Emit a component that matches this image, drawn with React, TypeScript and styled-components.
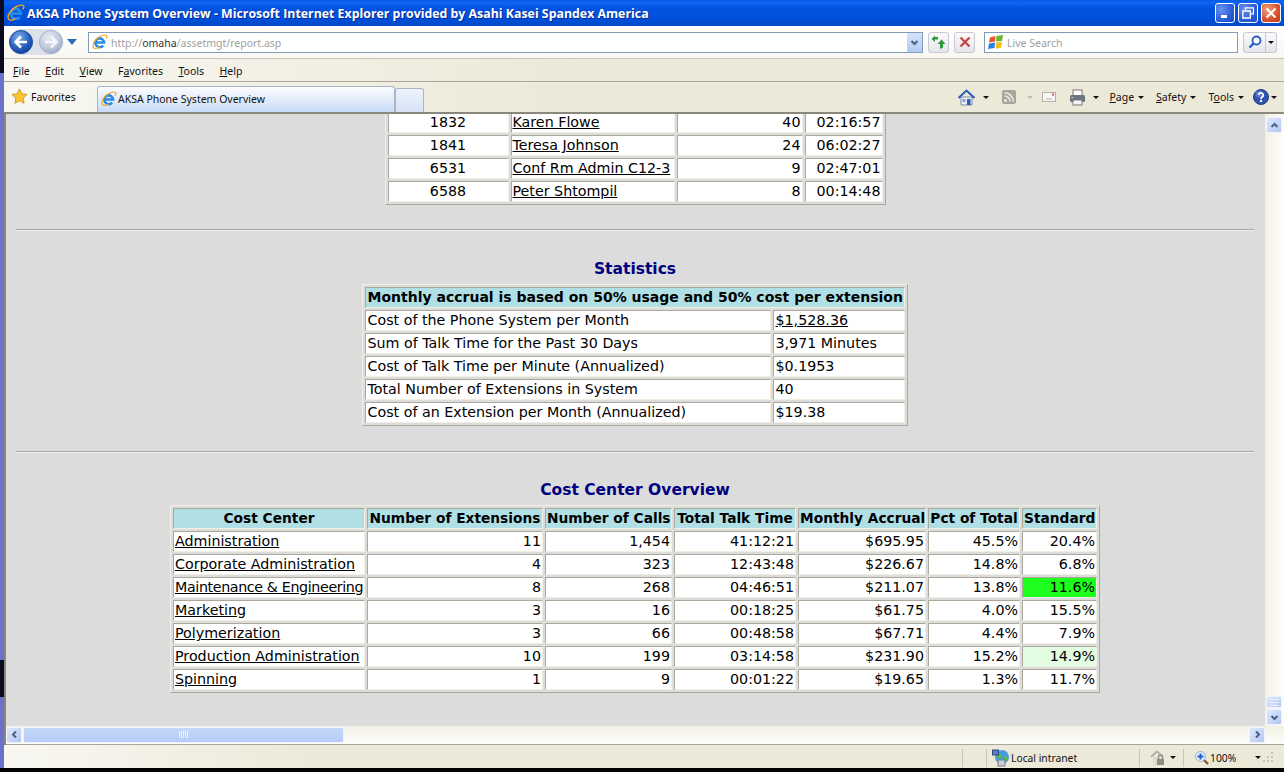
import React from 'react';
import styled, { createGlobalStyle, css } from 'styled-components';

const GlobalStyle = createGlobalStyle`
  html, body { margin: 0; padding: 0; background: #000; }
  #root { width: 1284px; height: 772px; overflow: hidden; }
  * { box-sizing: border-box; }
`;

const uiFont = `'Noto Sans', 'Open Sans', 'Liberation Sans', sans-serif`;
const pageFont = `'DejaVu Sans', Verdana, sans-serif`;

const Win = styled.div`
  width: 1284px;
  height: 772px;
  display: flex;
  flex-direction: column;
  padding: 0 0 4px 4px;
  background: linear-gradient(180deg, #0a0a20 0 73px, #6b70c8 73px 660px, #0a0a20 660px 697px, #6b70c8 697px 768px, #000 768px);
  overflow: hidden;
  font-family: ${uiFont};
`;

const TitleBar = styled.div`
  height: 26px;
  flex: none;
  display: flex;
  align-items: center;
  padding: 0 3px 0 3px;
  gap: 3px;
  background: linear-gradient(180deg, #0a5be0 0%, #0b66f2 10%, #0353e1 30%, #0050dc 70%, #0249c8 100%);
`;

const TitleText = styled.div`
  flex: 1;
  margin-left: -1px;
  color: #fff;
  font-family: 'Open Sans', sans-serif;
  font-weight: 700;
  font-size: 12.35px;
  white-space: nowrap;
  text-shadow: 1px 1px 0 #0a2a90;
`;

const WinBtn = styled.div<{ $close?: boolean }>`
  width: 20px;
  height: 20px;
  border: 1px solid #fff;
  border-radius: 3px;
  display: flex;
  align-items: center;
  justify-content: center;
  background: ${(p) => (p.$close
    ? 'radial-gradient(circle at 30% 30%, #f0a080, #d8502c 60%, #c03a18)'
    : 'radial-gradient(circle at 30% 30%, #6a92ee, #2a5ed8 60%, #1a48c0)')};
`;

const Body = styled.div`
  flex: 1;
  min-height: 0;
  display: flex;
  flex-direction: column;
  background: #ece9d8;
`;

const NavBar = styled.div`
  height: 33px;
  flex: none;
  display: flex;
  align-items: center;
  padding: 0 7px 0 5px;
  background: linear-gradient(180deg, #ffffff, #f8f7f1);
  border-bottom: 1px solid #c9c6b8;
`;

const NavCapsule = styled.div`
  width: 54px;
  height: 26px;
  flex: none;
  display: flex;
  justify-content: space-between;
  align-items: center;
  border-radius: 13px;
  background: #dfe1ea;
`;

const Dropdown = styled.div`
  width: 25px;
  flex: none;
  display: flex;
  justify-content: center;
  padding-right: 8px;
`;

const Field = styled.div<{ $w: number; $ml?: number }>`
  width: ${(p) => p.$w}px;
  height: 21px;
  flex: none;
  margin-left: ${(p) => p.$ml ?? 0}px;
  display: flex;
  align-items: center;
  background: #fff;
  border: 1px solid #7f9db9;
  font-size: 10.5px;
  color: #a0a0a0;
  white-space: nowrap;
`;

const FieldIcon = styled.span`
  display: flex;
  padding: 0 3px 0 3px;
`;

const FieldText = styled.span`
  flex: 1;
  padding-top: 1px;
`;

const Strong = styled.span`
  color: #333;
`;

const ComboArrow = styled.div`
  width: 15px;
  height: 19px;
  flex: none;
  display: flex;
  align-items: center;
  justify-content: center;
  background: linear-gradient(180deg, #d6e2fb, #b4caf4);
`;

const ToolBtn = styled.div<{ $ml: number; $w?: number }>`
  width: ${(p) => p.$w ?? 21}px;
  height: 21px;
  flex: none;
  margin-left: ${(p) => p.$ml}px;
  display: flex;
  align-items: center;
  justify-content: center;
  border: 1px solid #c8c8d0;
  border-radius: 3px;
  background: linear-gradient(180deg, #fbfbfd, #e4e4ec);
`;

const SplitPart = styled.div<{ $w: number; $divider?: boolean }>`
  width: ${(p) => p.$w}px;
  height: 100%;
  display: flex;
  align-items: center;
  justify-content: center;
  ${(p) => p.$divider && css`border-left: 1px solid #c8c8d0;`}
`;

const MenuBar = styled.div`
  height: 23px;
  flex: none;
  display: flex;
  align-items: center;
  gap: 15.5px;
  padding: 1px 0 0 9px;
  font-size: 10.5px;
  color: #111;
  background: linear-gradient(90deg, #f8f7f2, #ece9d8 45%);
  border-bottom: 1px solid #aca899;
`;

const TabRow = styled.div`
  height: 30px;
  flex: none;
  display: flex;
  align-items: flex-end;
  font-size: 10.5px;
  color: #111;
  background: linear-gradient(90deg, #f8f7f2, #ece9d8 45%);
`;

const FavBtn = styled.div`
  width: 93px;
  height: 30px;
  flex: none;
  display: flex;
  align-items: center;
  gap: 3px;
  padding: 0 0 1px 7px;
`;

const Tab = styled.div`
  width: 298px;
  height: 26px;
  flex: none;
  display: flex;
  align-items: center;
  gap: 1px;
  padding: 0 0 1px 3px;
  border: 1px solid #a9b4c8;
  border-bottom: none;
  border-radius: 3px 3px 0 0;
  background: linear-gradient(180deg, #fbfcfe, #c9dcf7);
`;

const NewTab = styled.div`
  width: 29px;
  height: 24px;
  flex: none;
  border: 1px solid #a9b4c8;
  border-bottom: none;
  border-radius: 3px 3px 0 0;
  background: linear-gradient(180deg, #eef3fb, #d5e2f6);
`;

const TabTools = styled.div`
  flex: 1;
  height: 30px;
  display: flex;
  align-items: center;
  justify-content: flex-end;
  padding: 0 7px 0 0;
`;

const ToolLabel = styled.span<{ $ml: number; $gap?: number }>`
  margin-left: ${(p) => p.$ml}px;
  display: flex;
  align-items: center;
  gap: ${(p) => p.$gap ?? 4}px;
`;

const Caret = styled.i<{ $ml?: number; $pale?: boolean }>`
  display: inline-block;
  margin-left: ${(p) => p.$ml ?? 0}px;
  border-left: 3px solid transparent;
  border-right: 3px solid transparent;
  border-top: 3px solid ${(p) => (p.$pale ? '#c0bdb0' : '#111')};
`;

const Viewport = styled.div`
  flex: 1;
  min-height: 0;
  display: flex;
  flex-direction: column;
  border-top: 2px solid #8a887c;
  border-left: 2px solid #8a887c;
`;

const ViewportMain = styled.div`
  flex: 1;
  min-height: 0;
  display: flex;
`;

const Page = styled.div`
  flex: 1;
  min-width: 0;
  overflow: hidden;
  padding-right: 1px;
  background: #dcdcdc;
  font-family: ${pageFont};
  font-size: 14.25px;
  line-height: 17px;
  color: #000;
`;

const VScroll = styled.div`
  width: 19px;
  flex: none;
  display: flex;
  flex-direction: column;
  justify-content: space-between;
  padding: 3px 2px 1px 1px;
  background: linear-gradient(90deg, #f3f1e6, #fdfdf9);
`;

const VBottom = styled.div`
  display: flex;
  flex-direction: column;
  gap: 1px;
`;

const ScrollBtn = styled.div<{ $h?: number }>`
  height: ${(p) => p.$h ?? 16}px;
  width: 16px;
  flex: none;
  display: flex;
  align-items: center;
  justify-content: center;
  border: 1px solid #eef3fd;
  border-radius: 2px;
  background: linear-gradient(135deg, #dfe8fc, #b4c8f4);
`;

const HScroll = styled.div`
  height: 19px;
  flex: none;
  display: flex;
  align-items: center;
  padding: 0 0 1px 0;
  background: linear-gradient(180deg, #f3f1e6, #fdfdf9);
  border-bottom: 1px solid #a8a698;
`;

const HThumb = styled.div`
  width: 321px;
  height: 16px;
  margin-left: 1px;
  display: flex;
  align-items: center;
  justify-content: center;
  gap: 1px;
  border: 1px solid #eef3fd;
  border-radius: 2px;
  background: linear-gradient(180deg, #c6d6fa, #b6cbf7);
`;

const Grip = styled.i`
  width: 1px;
  height: 7px;
  background: #eef3fd;
`;

const HSpacer = styled.div`
  flex: 1;
`;

const HCorner = styled.div`
  width: 19px;
  flex: none;
`;

const StatusBar = styled.div`
  height: 23px;
  flex: none;
  display: flex;
  align-items: center;
  padding-top: 2px;
  font-size: 10.3px;
  color: #111;
  background: linear-gradient(90deg, #f8f7f2, #ece9d8 25%);
`;

const StatusCell = styled.div<{ $w?: number; $pad?: number; $last?: boolean; $gap?: number }>`
  height: 18px;
  ${(p) => (p.$w ? css`width: ${p.$w}px; flex: none;` : css`flex: 1;`)}
  display: flex;
  align-items: center;
  gap: ${(p) => p.$gap ?? 1}px;
  padding-left: ${(p) => p.$pad ?? 5}px;
  ${(p) => !p.$last && css`border-right: 1px solid #c9c6b8;`}
`;

const ScrolledTable = styled.div`
  margin-top: -5px;
`;

const Rule = styled.hr<{ $top: number }>`
  height: 2px;
  margin: ${(p) => p.$top}px 10px 0 10px;
  border: none;
  border-top: 1px solid #aca899;
  border-bottom: 1px solid #f0f0f0;
`;

const Heading = styled.h2<{ $top: number }>`
  margin: ${(p) => p.$top}px 0 5px;
  text-align: center;
  font-size: 15.5px;
  line-height: 20px;
  font-weight: 700;
  color: #000080;
`;

const Table = styled.table<{ $w: number }>`
  width: ${(p) => p.$w}px;
  margin: 0 auto;
  table-layout: fixed;
  border-collapse: separate;
  border-spacing: 2px;
  border: 1px solid;
  border-color: #f1efe2 #aca899 #aca899 #f1efe2;
  background: #dcdcdc;
`;

const Cell = styled.td<{ $align?: string; $bg?: string }>`
  height: 21px;
  padding: 1px;
  text-align: ${(p) => p.$align ?? 'left'};
  white-space: nowrap;
  background: ${(p) => p.$bg ?? '#fff'};
  border: 1px solid;
  border-color: #aca899 #f1efe2 #f1efe2 #aca899;
`;

const HeadCell = styled.th<{ $align?: string; $size?: number }>`
  height: 21px;
  padding: 1px;
  text-align: ${(p) => p.$align ?? 'center'};
  white-space: nowrap;
  font-size: ${(p) => p.$size ?? 13.75}px;
  font-weight: 700;
  background: #b0e0e6;
  border: 1px solid;
  border-color: #aca899 #f1efe2 #f1efe2 #aca899;
`;

const PageLink = styled.a<{ $tight?: boolean }>`
  color: #000;
  text-decoration: underline;
  ${(p) => p.$tight && css`letter-spacing: -0.37px;`}
`;

const Ie = ({ size = 16 }: { size?: number }) => (
  <svg width={size} height={size} viewBox="0 0 16 16">
    <path d="M3.400 8.600h8.800a4.400 4.400 0 1 0-1 3" fill="none" stroke="#2a8cea" strokeWidth="2.500" />
    <path d="M1.500 13.500C-.5 10 4 4 9 2c3-1.300 6-1.500 6 .5 0 .8-.5 1.500-1 2.200M1.500 13.500c1 1.500 3.500 1 6-.5" fill="none" stroke="#f2a81e" strokeWidth="1.200" />
  </svg>
);

const Arrow = ({ dir, color }: { dir: 'left' | 'right'; color: string }) => (
  <svg width="24" height="24" viewBox="0 0 24 24">
    <defs>
      <radialGradient id={`nav-${dir}`} cx="40%" cy="30%" r="75%">
        <stop offset="0" stopColor={dir === 'left' ? '#7fb0ee' : '#e8ecf4'} />
        <stop offset="0.6" stopColor={dir === 'left' ? '#2a62c0' : '#c0cadc'} />
        <stop offset="1" stopColor={dir === 'left' ? '#123e98' : '#9aa8c4'} />
      </radialGradient>
    </defs>
    <circle cx="12" cy="12" r="11.500" fill={`url(#nav-${dir})`} stroke={dir === 'left' ? '#1c4a9c' : '#a8b4cc'} />
    <path
      d={dir === 'left' ? 'M18 12H7M12 6.500 6.500 12l5.500 5.500' : 'M6 12h11M12 6.500l5.500 5.500-5.500 5.500'}
      fill="none"
      stroke={color}
      strokeWidth="2.600"
    />
  </svg>
);

const Chevron = ({ dir, color = '#4d6185', size = 9 }: { dir: 'up' | 'down' | 'left' | 'right'; color?: string; size?: number }) => {
  const d = { up: 'M1.500 6 4.500 3l3 3', down: 'M1.500 3l3 3 3-3', left: 'M6 1.500 3 4.500l3 3', right: 'M3 1.500l3 3-3 3' }[dir];
  return (
    <svg width={size} height={size} viewBox="0 0 9 9">
      <path d={d} fill="none" stroke={color} strokeWidth="2" />
    </svg>
  );
};

const Star = () => (
  <svg width="17" height="17" viewBox="0 0 17 17">
    <path d="M8.500 1l2.300 4.800 5.200.7-3.800 3.600.9 5.200-4.600-2.500-4.600 2.500.9-5.200L1 6.500l5.200-.7z" fill="#fbc531" stroke="#c98a14" strokeWidth="0.800" />
  </svg>
);

const WinFlag = () => (
  <svg width="16" height="16" viewBox="0 0 16 16">
    <path d="M2 3.500 7.500 2 7 7.500 1 8.500z" fill="#e8552a" />
    <path d="M8.500 2 15 1l-1 6-6 .5z" fill="#6cb82c" />
    <path d="M1 9.500 7 8.500 6.500 14 0 15z" fill="#2a7fe0" />
    <path d="M8 8.500l6-.5-1 6-5.500.5z" fill="#f4bf1c" />
  </svg>
);

const Home = () => (
  <svg width="17" height="17" viewBox="0 0 17 17">
    <path d="M3 8v8h11V8z" fill="#f0f0f4" stroke="#7a8aa8" />
    <path d="M.5 9 8.500 1.500 16.500 9" fill="none" stroke="#2c5cb4" strokeWidth="2" />
    <rect x="9" y="10" width="3.500" height="6" fill="#2c5cb4" />
    <rect x="4.500" y="10" width="3" height="3" fill="#7ea4dc" />
  </svg>
);

const Feed = () => (
  <svg width="14" height="14" viewBox="0 0 14 14">
    <rect width="14" height="14" rx="2" fill="#a8a69c" />
    <circle cx="3.500" cy="10.500" r="1.500" fill="#eeece4" />
    <path d="M2.500 6a5.500 5.500 0 0 1 5.500 5.500M2.500 2.800a8.700 8.700 0 0 1 8.700 8.700" fill="none" stroke="#eeece4" strokeWidth="1.600" />
  </svg>
);

const Mail = () => (
  <svg width="14" height="10" viewBox="0 0 14 10">
    <rect x="0.500" y="0.500" width="13" height="9" fill="#f6f6f4" stroke="#b4b2a8" />
    <path d="M4 7h6" stroke="#b4b2a8" />
    <rect x="10" y="1.500" width="2" height="2" fill="#e04a3a" />
  </svg>
);

const Printer = () => (
  <svg width="17" height="17" viewBox="0 0 17 17">
    <rect x="4" y="1" width="9" height="6" fill="#fff" stroke="#777" />
    <rect x="1" y="6" width="15" height="7" rx="1.500" fill="#6e7480" />
    <rect x="4" y="11" width="9" height="5" fill="#f4f6fa" stroke="#777" />
    <rect x="2.500" y="8" width="2" height="1" fill="#c4e0a4" />
  </svg>
);

const Help = () => (
  <svg width="16" height="16" viewBox="0 0 16 16">
    <circle cx="8" cy="8" r="7.500" fill="#2f55b0" stroke="#1c3a86" />
    <circle cx="6" cy="5" r="3.500" fill="#6c8cd8" opacity="0.6" />
    <path d="M5.700 6a2.300 2.200 0 1 1 3.400 2C8.300 8.500 8 9 8 10" fill="none" stroke="#fff" strokeWidth="1.800" />
    <rect x="7" y="11" width="2" height="2" fill="#fff" />
  </svg>
);

const Refresh = () => (
  <svg width="15" height="15" viewBox="0 0 15 15">
    <path d="M7 2v2.500h-3V7L.5 4 4 .5V2z" fill="#2e9a3c" />
    <path d="M9 14V9H6.500l4-4.500L14.500 9H12v3.500z" fill="#2e9a3c" />
  </svg>
);

const Stop = () => (
  <svg width="12" height="12" viewBox="0 0 12 12">
    <path d="M1.500 1.500l9 9M10.500 1.500l-9 9" stroke="#c84848" strokeWidth="2.400" />
  </svg>
);

const Magnifier = () => (
  <svg width="14" height="14" viewBox="0 0 14 14">
    <circle cx="8.500" cy="5.500" r="4" fill="#fff" stroke="#2a5cc4" strokeWidth="1.800" />
    <path d="M5.500 8.500 1.500 12.500" stroke="#2a5cc4" strokeWidth="2.400" />
  </svg>
);

const Network = () => (
  <svg width="18" height="18" viewBox="0 0 18 18">
    <circle cx="10" cy="8" r="7" fill="#4a9ce0" />
    <path d="M6 3c3 1 4 4 3 6-2 1-4-1-5-2zM12 8c2-1 4 0 4 2-1 2-3 3-4 2z" fill="#58b848" />
    <rect x="0.500" y="1" width="6" height="5" fill="#5a7cc0" stroke="#2c4a88" />
    <rect x="6" y="11" width="7" height="6" fill="#c8ccd8" stroke="#7a7e90" />
  </svg>
);

const Lock = () => (
  <svg width="17" height="16" viewBox="0 0 17 16">
    <path d="M1 7 7 1.500 13 7" fill="none" stroke="#b4b2a8" strokeWidth="2" />
    <rect x="3" y="7" width="8" height="8" fill="#dedcd0" />
    <rect x="7" y="9" width="7" height="6" fill="#908e84" />
    <path d="M8.500 9V7a2 2 0 0 1 4 0v2" fill="none" stroke="#908e84" strokeWidth="1.300" />
  </svg>
);

const Zoomer = () => (
  <svg width="14" height="14" viewBox="0 0 14 14">
    <path d="M8.500 8.500 13 13" stroke="#8a5a20" strokeWidth="2.400" />
    <circle cx="5.500" cy="5.500" r="5" fill="#e4effc" stroke="#8ab0e0" />
    <path d="M5.500 2.500v6M2.500 5.500h6" stroke="#1c62c8" strokeWidth="2" />
  </svg>
);

const ResizeGrip = () => (
  <svg width="12" height="12" viewBox="0 0 12 12">
    <path d="M9 0h2v2H9zM5 4h2v2H5zM9 4h2v2H9zM1 8h2v2H1zM5 8h2v2H5zM9 8h2v2H9z" fill="#c4c2b4" />
  </svg>
);

const phoneRows = [
  ['1832', 'Karen Flowe', '40', '02:16:57'],
  ['1841', 'Teresa Johnson', '24', '06:02:27'],
  ['6531', 'Conf Rm Admin C12-3', '9', '02:47:01'],
  ['6588', 'Peter Shtompil', '8', '00:14:48'],
];

const statRows = [
  ['Cost of the Phone System per Month', '$1,528.36'],
  ['Sum of Talk Time for the Past 30 Days', '3,971 Minutes'],
  ['Cost of Talk Time per Minute (Annualized)', '$0.1953'],
  ['Total Number of Extensions in System', '40'],
  ['Cost of an Extension per Month (Annualized)', '$19.38'],
];

const costHead = ['Cost Center', 'Number of Extensions', 'Number of Calls', 'Total Talk Time', 'Monthly Accrual', 'Pct of Total', 'Standard'];

const costRows: { cells: string[]; bg?: string; tight?: boolean }[] = [
  { cells: ['Administration', '11', '1,454', '41:12:21', '$695.95', '45.5%', '20.4%'] },
  { cells: ['Corporate Administration', '4', '323', '12:43:48', '$226.67', '14.8%', '6.8%'] },
  { cells: ['Maintenance & Engineering', '8', '268', '04:46:51', '$211.07', '13.8%', '11.6%'], bg: '#1eff1e', tight: true },
  { cells: ['Marketing', '3', '16', '00:18:25', '$61.75', '4.0%', '15.5%'] },
  { cells: ['Polymerization', '3', '66', '00:48:58', '$67.71', '4.4%', '7.9%'] },
  { cells: ['Production Administration', '10', '199', '03:14:58', '$231.90', '15.2%', '14.9%'], bg: '#e2fde2' },
  { cells: ['Spinning', '1', '9', '00:01:22', '$19.65', '1.3%', '11.7%'] },
];

const App: React.FC = () => (
  <Win>
    <GlobalStyle />
    <TitleBar>
      <Ie size={18} />
      <TitleText>AKSA Phone System Overview - Microsoft Internet Explorer provided by Asahi Kasei Spandex America</TitleText>
      <WinBtn>
        <svg width="10" height="10" viewBox="0 0 10 10"><rect x="1" y="7" width="6" height="3" fill="#fff" /></svg>
      </WinBtn>
      <WinBtn>
        <svg width="12" height="12" viewBox="0 0 12 12"><path d="M3.500 3V.8h8v6H9M.8 4h7.500v7H.8z" fill="none" stroke="#fff" strokeWidth="1.300" /></svg>
      </WinBtn>
      <WinBtn $close>
        <svg width="12" height="12" viewBox="0 0 12 12"><path d="M1.500 1.500l9 9M10.500 1.500l-9 9" stroke="#fff" strokeWidth="2" /></svg>
      </WinBtn>
    </TitleBar>
    <Body>
      <NavBar>
        <NavCapsule>
          <Arrow dir="left" color="#fff" />
          <Arrow dir="right" color="#f4f6fa" />
        </NavCapsule>
        <Dropdown>
          <svg width="10" height="6" viewBox="0 0 10 6"><path d="M0 0h10L5 6z" fill="#2e6ab8" /></svg>
        </Dropdown>
        <Field $w={835}>
          <FieldIcon><Ie /></FieldIcon>
          <FieldText>http://<Strong>omaha</Strong>/assetmgt/report.asp</FieldText>
          <ComboArrow><Chevron dir="down" /></ComboArrow>
        </Field>
        <ToolBtn $ml={5}><Refresh /></ToolBtn>
        <ToolBtn $ml={5}><Stop /></ToolBtn>
        <Field $w={254} $ml={9}>
          <FieldIcon><WinFlag /></FieldIcon>
          <FieldText>Live Search</FieldText>
        </Field>
        <ToolBtn $ml={5} $w={34}>
          <SplitPart $w={21}><Magnifier /></SplitPart>
          <SplitPart $w={11} $divider><Caret /></SplitPart>
        </ToolBtn>
      </NavBar>
      <MenuBar>
        <span><u>F</u>ile</span>
        <span><u>E</u>dit</span>
        <span><u>V</u>iew</span>
        <span>F<u>a</u>vorites</span>
        <span><u>T</u>ools</span>
        <span><u>H</u>elp</span>
      </MenuBar>
      <TabRow>
        <FavBtn><Star />Favorites</FavBtn>
        <Tab><Ie />AKSA Phone System Overview</Tab>
        <NewTab />
        <TabTools>
          <Home />
          <Caret $ml={8} />
          <ToolLabel $ml={13}><Feed /></ToolLabel>
          <Caret $ml={11} $pale />
          <ToolLabel $ml={9}><Mail /></ToolLabel>
          <ToolLabel $ml={13}><Printer /></ToolLabel>
          <Caret $ml={7} />
          <ToolLabel $ml={10}><span><u>P</u>age</span><Caret /></ToolLabel>
          <ToolLabel $ml={12}><span><u>S</u>afety</span><Caret /></ToolLabel>
          <ToolLabel $ml={12}><span>T<u>o</u>ols</span><Caret /></ToolLabel>
          <ToolLabel $ml={9} $gap={2}><Help /><Caret /></ToolLabel>
        </TabTools>
      </TabRow>
      <Viewport>
        <ViewportMain>
          <Page>
            <ScrolledTable>
              <Table $w={501}>
                <colgroup><col width="121" /><col width="164" /><col width="126" /><col width="78" /></colgroup>
                <tbody>
                  {phoneRows.map((r) => (
                    <tr key={r[0]}>
                      <Cell $align="center">{r[0]}</Cell>
                      <Cell><PageLink href="#">{r[1]}</PageLink></Cell>
                      <Cell $align="right">{r[2]}</Cell>
                      <Cell $align="right">{r[3]}</Cell>
                    </tr>
                  ))}
                </tbody>
              </Table>
            </ScrolledTable>
            <Rule $top={24} />
            <Heading $top={28}>Statistics</Heading>
            <Table $w={545}>
              <colgroup><col width="406" /><col width="131" /></colgroup>
              <tbody>
                <tr><HeadCell colSpan={2} $align="left" $size={14}>Monthly accrual is based on 50% usage and 50% cost per extension</HeadCell></tr>
                {statRows.map((r, i) => (
                  <tr key={r[0]}>
                    <Cell>{r[0]}</Cell>
                    <Cell>{i === 0 ? <PageLink href="#">{r[1]}</PageLink> : r[1]}</Cell>
                  </tr>
                ))}
              </tbody>
            </Table>
            <Rule $top={25} />
            <Heading $top={27}>Cost Center Overview</Heading>
            <Table $w={930}>
              <colgroup><col width="192" /><col width="176" /><col width="127" /><col width="122" /><col width="128" /><col width="92" /><col width="75" /></colgroup>
              <thead>
                <tr>{costHead.map((h) => <HeadCell key={h}>{h}</HeadCell>)}</tr>
              </thead>
              <tbody>
                {costRows.map((r) => (
                  <tr key={r.cells[0]}>
                    {r.cells.map((c, i) => (
                      i === 0
                        ? <Cell key={c}><PageLink href="#" $tight={r.tight}>{c}</PageLink></Cell>
                        : <Cell key={`${i}-${c}`} $align="right" $bg={i === 6 ? r.bg : undefined}>{c}</Cell>
                    ))}
                  </tr>
                ))}
              </tbody>
            </Table>
          </Page>
          <VScroll>
            <ScrollBtn><Chevron dir="up" /></ScrollBtn>
            <VBottom>
              <ScrollBtn $h={12}>
                <svg width="9" height="7" viewBox="0 0 9 7"><path d="M0 .5h9M0 3.500h9M0 6.500h9" stroke="#eef3fd" /></svg>
              </ScrollBtn>
              <ScrollBtn><Chevron dir="down" /></ScrollBtn>
            </VBottom>
          </VScroll>
        </ViewportMain>
        <HScroll>
          <ScrollBtn><Chevron dir="left" /></ScrollBtn>
          <HThumb><Grip /><Grip /><Grip /><Grip /><Grip /></HThumb>
          <HSpacer />
          <ScrollBtn><Chevron dir="right" /></ScrollBtn>
          <HCorner />
        </HScroll>
      </Viewport>
      <StatusBar>
        <StatusCell />
        <StatusCell $w={24} />
        <StatusCell $w={153}><Network />Local intranet</StatusCell>
        <StatusCell $w={44} $pad={10} $gap={3}><Lock /><Caret /></StatusCell>
        <StatusCell $w={100} $pad={11} $last><Zoomer />100%<Caret $ml={18} /><ResizeGrip /></StatusCell>
      </StatusBar>
    </Body>
  </Win>
);

export default App;
